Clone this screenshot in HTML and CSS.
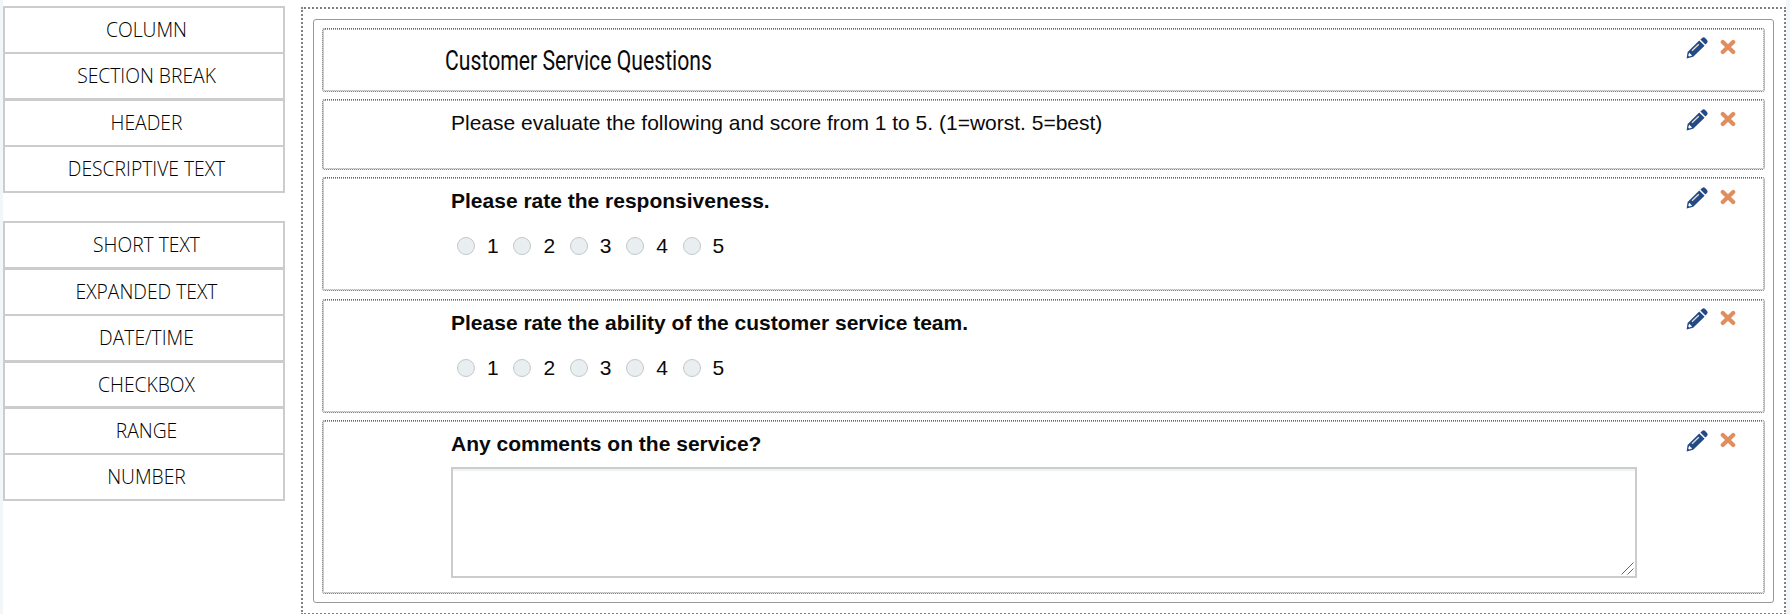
FILE: index.html
```html
<!DOCTYPE html>
<html lang="en">
<head>
    <meta charset="UTF-8">
    <meta name="viewport" content="width=device-width, initial-scale=1.0">
    <title>Form Builder</title>
    <link rel="stylesheet" href="styles.css">
</head>
<body>
    <svg class="sprite">
        <symbol id="pencil" viewBox="0 0 22 22">
            <path d="M0.6 21.4 L1.6 15 L13.2 3.6 L18.6 8.8 L7.2 19.8 Z" fill="#234a86"/>
            <path d="M14.4 2.6 L16.4 0.8 Q17.8 -0.2 19.2 1 L21 3 Q22.2 4.5 21 5.9 L19.4 7.6 Z" fill="#234a86"/>
            <path d="M3.2 15.8 L6.2 18.6 L3.2 19.4 L2.2 18.4 Z" fill="#fff"/>
            <path d="M6 13.8 L12.8 7.2" stroke="#e9e2cf" stroke-width="1.3"/>
        </symbol>
        <symbol id="cross" viewBox="0 0 16 16">
            <path d="M2.8 3 L13.2 13 M13.2 3 L2.8 13" stroke="#e18e5e" stroke-width="4.2" stroke-linecap="round"/>
        </symbol>
    </svg>
    <div class="page">
        <div class="sidebar">
            <div class="group">
                <div class="tool">COLUMN</div>
                <div class="tool">SECTION BREAK</div>
                <div class="tool">HEADER</div>
                <div class="tool">DESCRIPTIVE TEXT</div>
            </div>
            <div class="group">
                <div class="tool">SHORT TEXT</div>
                <div class="tool">EXPANDED TEXT</div>
                <div class="tool">DATE/TIME</div>
                <div class="tool">CHECKBOX</div>
                <div class="tool">RANGE</div>
                <div class="tool">NUMBER</div>
            </div>
        </div>
        <div class="canvas">
            <div class="column">
                <div class="field field-header">
                    <h2><span>Customer Service Questions</span></h2>
                    <div class="actions">
                        <svg class="edit"><use href="#pencil"/></svg>
                        <svg class="remove"><use href="#cross"/></svg>
                    </div>
                </div>
                <div class="field field-text">
                    <div class="content"><p>Please evaluate the following and score from 1 to 5. (1=worst. 5=best)</p></div>
                    <div class="actions">
                        <svg class="edit"><use href="#pencil"/></svg>
                        <svg class="remove"><use href="#cross"/></svg>
                    </div>
                </div>
                <div class="field field-range">
                    <div class="content">
                        <p class="question">Please rate the responsiveness.</p>
                        <div class="options">
                            <label><input type="radio" name="q1">1</label>
                            <label><input type="radio" name="q1">2</label>
                            <label><input type="radio" name="q1">3</label>
                            <label><input type="radio" name="q1">4</label>
                            <label><input type="radio" name="q1">5</label>
                        </div>
                    </div>
                    <div class="actions">
                        <svg class="edit"><use href="#pencil"/></svg>
                        <svg class="remove"><use href="#cross"/></svg>
                    </div>
                </div>
                <div class="field field-range">
                    <div class="content">
                        <p class="question">Please rate the ability of the customer service team.</p>
                        <div class="options">
                            <label><input type="radio" name="q2">1</label>
                            <label><input type="radio" name="q2">2</label>
                            <label><input type="radio" name="q2">3</label>
                            <label><input type="radio" name="q2">4</label>
                            <label><input type="radio" name="q2">5</label>
                        </div>
                    </div>
                    <div class="actions">
                        <svg class="edit"><use href="#pencil"/></svg>
                        <svg class="remove"><use href="#cross"/></svg>
                    </div>
                </div>
                <div class="field field-comments">
                    <div class="content">
                        <p class="question">Any comments on the service?</p>
                        <div class="comment-box">
                            <textarea></textarea>
                            <svg class="grip" viewBox="0 0 13 13"><path d="M0.5 12.5 L12.5 0.5 M6.5 12.5 L12.5 6.5" stroke="#666"/></svg>
                        </div>
                    </div>
                    <div class="actions">
                        <svg class="edit"><use href="#pencil"/></svg>
                        <svg class="remove"><use href="#cross"/></svg>
                    </div>
                </div>
            </div>
        </div>
    </div>
</body>
</html>
```

FILE: styles.css
```css
* {
    box-sizing: border-box;
}
body {
    margin: 0;
    height: 614px;
    overflow: hidden;
    background-color: #f1f7f9;
    font-family: "Liberation Sans", Arial, sans-serif;
    font-size: 21px;
    color: #0a0a0a;
}
.sprite {
    display: none;
}
.page {
    display: flex;
    align-items: flex-start;
    gap: 16px;
    height: 640px;
    margin: 0 4px 0 3px;
    background-color: #fff;
}
.sidebar {
    width: 282px;
    padding-top: 6px;
}
.group {
    margin-bottom: 29.8px;
}
.tool {
    height: 47.75px;
    margin-bottom: -1.35px;
    padding-left: 5px;
    border: 2px solid #ccc;
    font-family: "Open Sans", sans-serif;
    font-weight: 360;
    font-size: 19.3px;
    line-height: 44px;
    text-align: center;
    color: #000;
}
.canvas {
    flex: 1;
    height: 608px;
    margin-top: 7px;
    padding: 10px;
    border: 2px dotted #808080;
}
.column {
    height: 584px;
    padding: 8px;
    border: 1px solid #999;
    border-radius: 3px;
}
.field {
    display: flex;
    justify-content: space-between;
    margin-bottom: 7px;
    padding: 1px 1px 1px 128px;
    border: 1px dotted #666;
    border-right: 1px solid #bbb;
    border-radius: 3px;
    outline: 1px dotted #999;
    outline-offset: -2px;
}
.field-header {
    height: 64px;
    padding-left: 122px;
}
.field-text {
    height: 71px;
}
.field-range {
    height: 114px;
}
.field-range + .field-range {
    margin-top: 8px;
}
.field-comments {
    height: 174px;
}
h2 {
    margin: 9px 0 0;
    font-family: Roboto, sans-serif;
    font-weight: 400;
    font-size: 28px;
    line-height: 44px;
}
h2 span {
    display: inline-block;
    transform: scaleX(0.757);
    transform-origin: left;
}
p {
    margin: 10px 0 0;
    line-height: 24px;
}
.question {
    font-weight: bold;
}
.options {
    display: flex;
    margin: 21px 0 0 6px;
}
label {
    display: flex;
    align-items: center;
    width: 56.4px;
    line-height: 24px;
}
input {
    appearance: none;
    width: 18px;
    height: 18px;
    margin: 0 12px 0 0;
    border: 1px solid #c3c8ca;
    border-radius: 50%;
    background-color: #e9eff1;
}
.comment-box {
    position: relative;
    width: 1186px;
    margin-top: 11px;
}
textarea {
    display: block;
    width: 100%;
    height: 111px;
    border: 2px solid #ccc;
    box-shadow: inset 0 2px 1px #edf3f6;
    resize: none;
}
.grip {
    position: absolute;
    right: 3px;
    bottom: 3px;
    width: 13px;
    height: 13px;
}
.actions {
    display: flex;
    gap: 12px;
    margin: 8px 27px 0 0;
}
.field-header .actions,
.field-range + .field-range .actions {
    margin-top: 7px;
}
.edit {
    width: 22px;
    height: 22px;
}
.remove {
    width: 16px;
    height: 16px;
    margin-top: 2px;
}
```
